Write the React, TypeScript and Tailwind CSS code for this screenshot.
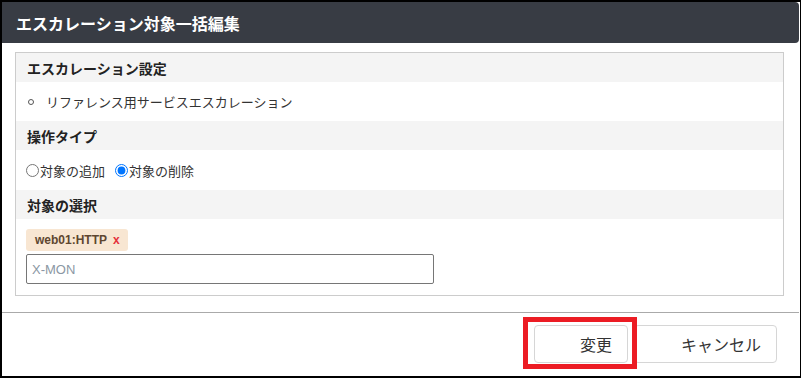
import React from "react";

const SectionHeader = ({ children }: { children: React.ReactNode }) => (
  <div className="h-[29px] bg-[#f4f4f4] flex items-center pl-[11px] text-[14px] font-bold text-[#222] leading-none">
    {children}
  </div>
);

const App = () => {
  return (
    <div
      className="w-[801px] h-[378px] bg-white border-l-2 border-t-2 border-b-2 border-r border-black flex flex-col overflow-hidden"
      style={{ fontFamily: '"Noto Sans CJK JP", "Noto Sans", sans-serif' }}
    >
      {/* Header */}
      <div className="h-[41px] mr-px bg-[#383c44] rounded-r-[4px] flex items-center pl-[14px] text-white text-[16px] font-bold leading-none shrink-0">
        エスカレーション対象一括編集
      </div>

      {/* Panel */}
      <div className="mt-[9px] ml-[13px] mr-[16px] border border-[#cccccc] flex flex-col shrink-0">
        <SectionHeader>エスカレーション設定</SectionHeader>
        <div className="h-[39px] flex items-center pl-[12px] text-[13px] text-[#333] leading-none">
          <span className="w-[6px] h-[6px] rounded-full border border-[#555] mr-[12px]"></span>
          リファレンス用サービスエスカレーション
        </div>

        <SectionHeader>操作タイプ</SectionHeader>
        <div className="h-[40px] flex items-center pl-[10px] text-[13px] text-[#333] leading-none">
          <label className="flex items-center">
            <input type="radio" name="op" className="m-0 mr-px w-[13px] h-[13px]" />
            対象の追加
          </label>
          <label className="flex items-center ml-[10px]">
            <input type="radio" name="op" defaultChecked className="m-0 mr-px w-[13px] h-[13px] accent-[#0075ff]" />
            対象の削除
          </label>
        </div>

        <SectionHeader>対象の選択</SectionHeader>
        <div className="pt-[10px] pb-[11px] pl-[10px] flex flex-col items-start">
          <span
            className="h-[22px] bg-[#f8e6d2] rounded-[3px] flex items-center pl-[9px] pr-[8px] text-[12px] font-bold text-[#5e4630] leading-none"
            style={{ fontFamily: '"Liberation Sans", sans-serif' }}
          >
            web01:HTTP
            <span className="ml-[6px] text-[#e5303b]">x</span>
          </span>
          <input
            type="text"
            placeholder="X-MON"
            className="mt-[3px] w-[408px] h-[30px] border border-[#767676] rounded-[2px] px-[5px] text-[13px] text-[#333] placeholder:text-[#8b97a3] outline-none"
            style={{ fontFamily: '"Liberation Sans", sans-serif' }}
          />
        </div>
      </div>

      {/* Footer */}
      <div className="mt-[16px] mr-px border-t border-[#aaaaaa] flex-1 flex justify-end items-start pt-[12px] pr-[22px]">
        <div className="relative z-10">
          <button className="h-[38px] w-[94px] bg-white border border-[#d6d6d6] rounded-[4px] text-[16px] text-[#333] text-left pl-[45px] leading-none">
            変更
          </button>
          <div className="absolute left-[-11px] top-[-8px] w-[114px] h-[52px] border-[5px] border-[#ec1c24] pointer-events-none"></div>
        </div>
        <button className="ml-[6px] h-[38px] w-[143px] bg-white border border-[#d6d6d6] rounded-[4px] text-[16px] text-[#333] text-left pl-[46px] leading-none">
          キャンセル
        </button>
      </div>
    </div>
  );
};

export default App;
